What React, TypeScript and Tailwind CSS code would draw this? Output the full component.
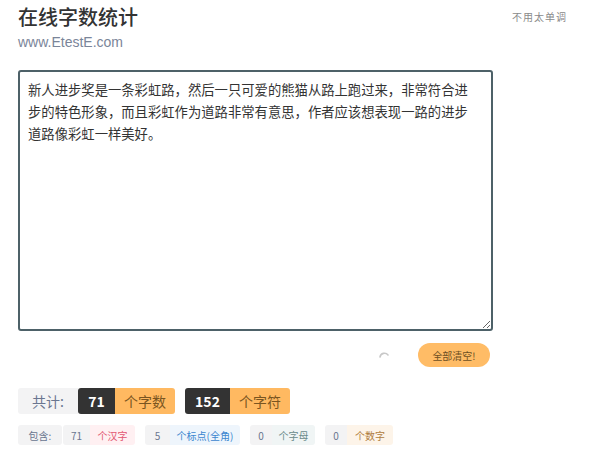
import React from "react";

const text =
  "新人进步奖是一条彩虹路，然后一只可爱的熊猫从路上跑过来，非常符合进步的特色形象，而且彩虹作为道路非常有意思，作者应该想表现一路的进步道路像彩虹一样美好。";

export default function App() {
  return (
    <div
      className="w-[600px] h-[452px] bg-white relative overflow-hidden"
      style={{ fontFamily: '"Noto Sans CJK SC", "Liberation Sans", sans-serif' }}
    >
      <div className="absolute right-[33px] top-[9px] text-[10px] tracking-[1px] text-[#8a8a8a]">不用太单调</div>
      <div className="pl-[18px] pt-[3px]">
        <h1 className="text-[20px] leading-[28px] font-medium text-[#333]">在线字数统计</h1>
        <div
          className="text-[14px] leading-[20px] mt-[1px] text-[#7a8599]"
          style={{ fontFamily: '"Liberation Sans", sans-serif' }}
        >
          www.EtestE.com
        </div>
        <textarea
          defaultValue={text}
          className="mt-[18px] block w-[475px] h-[261px] border-2 border-[#4d6168] rounded-[3px] pl-[8px] pr-[16px] py-[7px] text-[13.33px] leading-[22px] text-[#333] outline-none resize"
        />
        <div className="flex items-center w-[475px] justify-end mt-[12px] h-[24px]">
          <svg width="12" height="12" viewBox="0 0 12 12" className="mr-[28px]">
            <path d="M2 8 A4.5 4.5 0 0 1 10 6" fill="none" stroke="#c8c8c8" strokeWidth="1.6" strokeLinecap="round" />
          </svg>
          <button className="w-[72px] h-[24px] rounded-full bg-[#ffbc66] text-[10px] text-[#6e5023] mr-[3px]">全部清空!</button>
        </div>
        <div className="flex items-center mt-[21px] h-[26px] text-[14px]">
          <div className="h-full w-[60px] flex items-center justify-center bg-[#f3f3f4] text-[#6a7690] rounded-l-[3px]">共计:</div>
          <div className="h-full w-[37px] flex items-center justify-center bg-[#333] text-white font-bold rounded-l-[3px]">71</div>
          <div className="h-full w-[60px] flex items-center justify-center bg-[#ffb961] text-[#7a5520] rounded-r-[3px]">个字数</div>
          <div className="h-full w-[45px] ml-[10px] flex items-center justify-center bg-[#333] text-white font-bold rounded-l-[3px]">152</div>
          <div className="h-full w-[60px] flex items-center justify-center bg-[#ffb961] text-[#7a5520] rounded-r-[3px]">个字符</div>
        </div>
        <div className="flex items-center mt-[11px] h-[20px] text-[10px]">
          <div className="h-full w-[44px] flex items-center justify-center bg-[#f3f3f4] text-[#6a7690] rounded-[3px]">包含:</div>
          <div className="h-full w-[27px] ml-[1px] flex items-center justify-center bg-[#f3f3f4] text-[#6a7690] rounded-l-[3px]">71</div>
          <div className="h-full w-[45px] flex items-center justify-center bg-[#fff0f2] text-[#e25670] rounded-r-[3px]">个汉字</div>
          <div className="h-full w-[25px] ml-[10px] flex items-center justify-center bg-[#f3f3f4] text-[#6a7690] rounded-l-[3px]">5</div>
          <div className="h-full w-[70px] flex items-center justify-center bg-[#eef5fc] text-[#3c86cf] rounded-r-[3px]">个标点(全角)</div>
          <div className="h-full w-[22px] ml-[10px] flex items-center justify-center bg-[#f3f3f4] text-[#6a7690] rounded-l-[3px]">0</div>
          <div className="h-full w-[43px] flex items-center justify-center bg-[#f0f5f5] text-[#6b8a8a] rounded-r-[3px]">个字母</div>
          <div className="h-full w-[22px] ml-[10px] flex items-center justify-center bg-[#f3f3f4] text-[#6a7690] rounded-l-[3px]">0</div>
          <div className="h-full w-[46px] flex items-center justify-center bg-[#fdf4e9] text-[#b07d3e] rounded-r-[3px]">个数字</div>
        </div>
      </div>
    </div>
  );
}
